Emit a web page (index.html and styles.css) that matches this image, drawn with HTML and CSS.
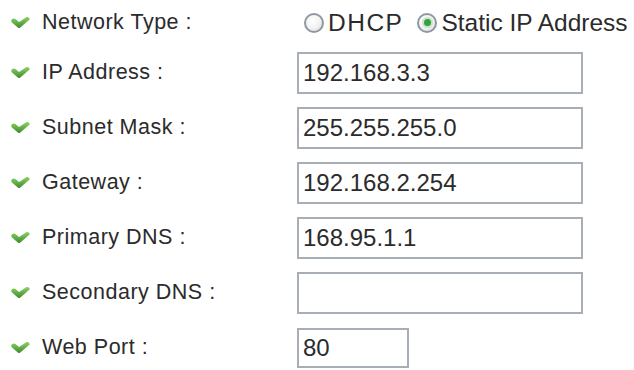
FILE: index.html
```html
<!DOCTYPE html>
<html lang="en">
<head>
    <meta charset="UTF-8">
    <title>Network Settings</title>
    <link rel="stylesheet" href="styles.css">
</head>
<body>
    <!-- shared check icon -->
    <svg class="defs" width="0" height="0">
        <defs>
            <linearGradient id="g" x1="0" y1="0" x2="0" y2="1">
                <stop offset="0" stop-color="#8ed267"/>
                <stop offset="1" stop-color="#3b8b2b"/>
            </linearGradient>
            <path id="tick" d="M0.3 3.6 C0.6 1.4 3.2 0.8 4.8 2.2 L8 5 L14.8 0.4 C16.6 -0.6 19 0.6 18.6 2.6 C15 5.6 11.6 8.6 9 10.8 C8.3 11.3 7.4 11.2 6.8 10.6 L1 5.6 C0.5 5.1 0.2 4.4 0.3 3.6 Z" fill="url(#g)"/>
        </defs>
    </svg>

    <!-- Network settings form -->
    <form class="net-form">
        <div class="row row-first">
            <label class="field-label"><svg class="check" viewBox="0 0 19 11"><use href="#tick"/></svg>Network Type :</label>
            <div class="radio-group">
                <label class="radio"><span class="radio-dot"></span><span class="radio-text dhcp">DHCP</span></label>
                <label class="radio"><span class="radio-dot checked"></span><span class="radio-text">Static IP Address</span></label>
            </div>
        </div>
        <div class="row">
            <label class="field-label"><svg class="check" viewBox="0 0 19 11"><use href="#tick"/></svg>IP Address :</label>
            <input class="text-input" type="text" value="192.168.3.3">
        </div>
        <div class="row">
            <label class="field-label"><svg class="check" viewBox="0 0 19 11"><use href="#tick"/></svg>Subnet Mask :</label>
            <input class="text-input" type="text" value="255.255.255.0">
        </div>
        <div class="row">
            <label class="field-label"><svg class="check" viewBox="0 0 19 11"><use href="#tick"/></svg>Gateway :</label>
            <input class="text-input" type="text" value="192.168.2.254">
        </div>
        <div class="row">
            <label class="field-label"><svg class="check" viewBox="0 0 19 11"><use href="#tick"/></svg>Primary DNS :</label>
            <input class="text-input" type="text" value="168.95.1.1">
        </div>
        <div class="row">
            <label class="field-label"><svg class="check" viewBox="0 0 19 11"><use href="#tick"/></svg>Secondary DNS :</label>
            <input class="text-input" type="text" value="">
        </div>
        <div class="row">
            <label class="field-label"><svg class="check" viewBox="0 0 19 11"><use href="#tick"/></svg>Web Port :</label>
            <input class="text-input port-input" type="text" value="80">
        </div>
    </form>
</body>
</html>
```

FILE: styles.css
```css
/* Basic reset */
* {
    margin: 0;
    padding: 0;
    box-sizing: border-box;
}

body {
    font-family: 'Liberation Sans', Arial, sans-serif;
    background-color: #ffffff;
    color: #2b2b2b;
}

.defs {
    position: absolute;
}

/* Form rows */
.net-form {
    display: flex;
    flex-direction: column;
}

.row {
    display: grid;
    grid-template-columns: 297px 1fr;
    align-items: center;
    height: 55px;
}

.row-first {
    height: 45px;
}

.field-label {
    display: flex;
    align-items: center;
    gap: 12px;
    padding-left: 11px;
    font-size: 21.5px;
    letter-spacing: 0.5px;
    color: #2b2b2b;
}

.check {
    width: 19px;
    height: 11px;
    flex-shrink: 0;
}

/* Radio buttons */
.radio-group {
    display: flex;
    align-items: center;
    gap: 14px;
    padding-left: 7px;
}

.radio {
    display: flex;
    align-items: center;
    gap: 4px;
}

.radio-dot {
    flex-shrink: 0;
    width: 20px;
    height: 20px;
    border-radius: 50%;
    border: 2px solid #8f98a2;
    background: radial-gradient(circle at 40% 35%, #ffffff 0%, #f3f3f3 50%, #d6d6d6 100%);
    display: flex;
    align-items: center;
    justify-content: center;
}

.radio-dot.checked::after {
    content: '';
    width: 7px;
    height: 7px;
    border-radius: 50%;
    background: #35a046;
    box-shadow: 0 0 0 2px #c4e8c6;
}

.radio-text {
    font-size: 24.5px;
    color: #2b2b2b;
}

.radio-text.dhcp {
    letter-spacing: 1.5px;
}

/* Text inputs */
.text-input {
    width: 286px;
    height: 42px;
    border: 2px solid #a7aeb6;
    padding: 0 4px;
    font-family: 'Liberation Sans', Arial, sans-serif;
    font-size: 24px;
    color: #2b2b2b;
    background: #ffffff;
    outline: none;
}

.port-input {
    width: 112px;
    height: 40px;
}
```
